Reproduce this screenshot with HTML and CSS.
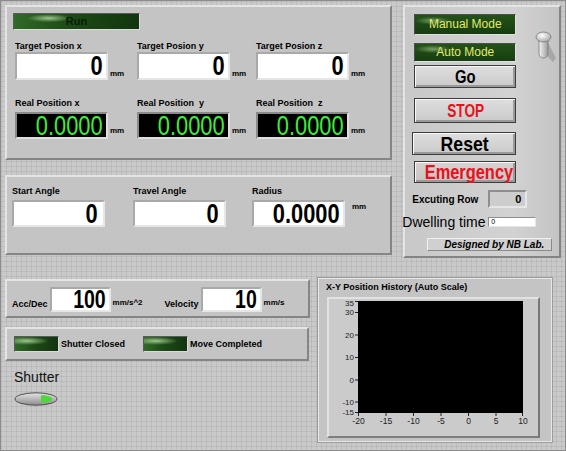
FILE: index.html
```html
<!DOCTYPE html>
<html lang="en">
<head>
    <meta charset="UTF-8">
    <title>Stage Control</title>
    <link rel="stylesheet" href="styles.css">
</head>
<body>
<div class="screen">
    <div class="top">
        <div class="left-col">
            <section class="panel pos">
                <div class="led run">Run</div>
                <div class="fields target">
                    <div class="field">
                        <div class="lbl">Target Posion x</div>
                        <div class="val-row"><div class="num ctl"><span>0</span></div><span class="unit">mm</span></div>
                    </div>
                    <div class="field">
                        <div class="lbl">Target Posion y</div>
                        <div class="val-row"><div class="num ctl"><span>0</span></div><span class="unit">mm</span></div>
                    </div>
                    <div class="field">
                        <div class="lbl">Target Posion z</div>
                        <div class="val-row"><div class="num ctl"><span>0</span></div><span class="unit">mm</span></div>
                    </div>
                </div>
                <div class="fields real">
                    <div class="field">
                        <div class="lbl">Real Position x</div>
                        <div class="val-row"><div class="num ind"><span>0.0000</span></div><span class="unit">mm</span></div>
                    </div>
                    <div class="field">
                        <div class="lbl">Real Position&nbsp; y</div>
                        <div class="val-row"><div class="num ind"><span>0.0000</span></div><span class="unit">mm</span></div>
                    </div>
                    <div class="field">
                        <div class="lbl">Real Position&nbsp; z</div>
                        <div class="val-row"><div class="num ind"><span>0.0000</span></div><span class="unit">mm</span></div>
                    </div>
                </div>
            </section>
            <section class="panel arc">
                <div class="fields angles">
                    <div class="field">
                        <div class="lbl">Start Angle</div>
                        <div class="val-row"><div class="num ctl"><span>0</span></div></div>
                    </div>
                    <div class="field">
                        <div class="lbl">Travel Angle</div>
                        <div class="val-row"><div class="num ctl"><span>0</span></div></div>
                    </div>
                    <div class="field">
                        <div class="lbl">Radius</div>
                        <div class="val-row"><div class="num ctl"><span>0.0000</span></div><span class="unit up">mm</span></div>
                    </div>
                </div>
            </section>
        </div>
        <aside class="panel ctrl">
            <div class="ctrl-top">
                <div class="stack">
                    <div class="mode manual">Manual Mode</div>
                    <div class="mode auto">Auto Mode</div>
                    <div class="btn go"><span>Go</span></div>
                    <div class="btn stop"><span>STOP</span></div>
                    <div class="btn reset"><span>Reset</span></div>
                    <div class="btn emerg"><span>Emergency</span></div>
                </div>
                <svg class="toggle" width="22" height="32" viewBox="0 0 22 32">
                    <defs>
                        <linearGradient id="lever" x1="0" x2="1">
                            <stop offset="0" stop-color="#f4f4f4"/>
                            <stop offset="1" stop-color="#9c9c9c"/>
                        </linearGradient>
                        <radialGradient id="cap" cx=".4" cy=".35" r=".7">
                            <stop offset="0" stop-color="#ffffff"/>
                            <stop offset="1" stop-color="#a4a4a4"/>
                        </radialGradient>
                    </defs>
                    <path d="M11 8 L21 27 L18 31 L9 22 Z" fill="#8e8e8e" opacity=".55"/>
                    <rect x="4" y="4" width="9" height="23" rx="4.5" fill="url(#lever)" stroke="#7a7a7a" stroke-width=".8"/>
                    <ellipse cx="8.5" cy="6" rx="7.5" ry="5" fill="url(#cap)" stroke="#7a7a7a" stroke-width=".8"/>
                </svg>
            </div>
            <div class="exec">
                <span class="exec-lbl">Excuting Row</span>
                <div class="exec-box">0</div>
            </div>
            <div class="dwell">
                <span class="dwell-lbl">Dwelling time</span>
                <div class="dwell-box">0</div>
            </div>
            <div class="designed">Designed by NB Lab.</div>
        </aside>
    </div>

    <div class="bottom">
        <div class="left-col2">
            <section class="panel motion">
                <span class="lbl2">Acc/Dec</span>
                <div class="num ctl small w61"><span>100</span></div>
                <span class="unit2">mm/s^2</span>
                <span class="lbl2 vel">Velocity</span>
                <div class="num ctl small w61"><span>10</span></div>
                <span class="unit2">mm/s</span>
            </section>
            <section class="panel status">
                <div class="st-item"><div class="led sm"></div><span>Shutter Closed</span></div>
                <div class="st-item"><div class="led sm"></div><span>Move Completed</span></div>
            </section>
            <div class="shutter">
                <div class="shutter-lbl">Shutter</div>
                <svg class="switch" width="46" height="15" viewBox="0 0 46 15">
                    <defs>
                        <linearGradient id="sw" x1="0" y1="0" x2="0" y2="1">
                            <stop offset="0" stop-color="#e4e4e4"/>
                            <stop offset="1" stop-color="#8c8c8c"/>
                        </linearGradient>
                    </defs>
                    <ellipse cx="22" cy="7" rx="21" ry="6.2" fill="url(#sw)" stroke="#4e4e4e" stroke-width="1"/>
                    <path d="M27 4 Q27 3 29 3 L36 4.5 Q41 7 36 9.5 L29 11 Q27 11 27 10 Z" fill="#4fd83c"/>
                </svg>
            </div>
        </div>
        <section class="graph">
            <div class="graph-title">X-Y Position History (Auto Scale)</div>
            <div class="plot">
                <svg width="209" height="137" viewBox="0 0 209 137">
                    <rect x="29" y="2" width="165" height="112" fill="#000"/>
                    <g stroke="#222" stroke-width="1">
                        <path d="M26 2.5h3M26 13.5h3M26 36h3M26 58.5h3M26 81h3M26 103h3M26 113.5h3"/>
                        <path d="M29.5 114v3M57 114v3M84.5 114v3M112 114v3M139.5 114v3M167 114v3M193.5 114v3"/>
                    </g>
                    <g class="ylab">
                        <text x="25" y="7">35</text>
                        <text x="25" y="16">30</text>
                        <text x="25" y="38.5">20</text>
                        <text x="25" y="61">10</text>
                        <text x="25" y="83.5">0</text>
                        <text x="25" y="106">-10</text>
                        <text x="25" y="116">-15</text>
                    </g>
                    <g class="xlab">
                        <text x="29.5" y="125">-20</text>
                        <text x="57" y="125">-15</text>
                        <text x="84.5" y="125">-10</text>
                        <text x="112" y="125">-5</text>
                        <text x="139.5" y="125">0</text>
                        <text x="167" y="125">5</text>
                        <text x="194" y="125">10</text>
                    </g>
                </svg>
            </div>
        </section>
    </div>
</div>
</body>
</html>
```

FILE: styles.css
```css
*{ margin: 0; padding: 0; }
body{ margin: 0; background: #c6c6c6; font-family: "Liberation Sans", Arial, sans-serif; color: #000; }

.screen{
    width: 566px;
    height: 451px;
    box-sizing: border-box;
    padding: 4px;
    border: 1px solid #8c8c8c;
    background-color: #c9c9c9;
    background-image:
        linear-gradient(90deg, rgba(0,0,0,.06) 1px, transparent 1px),
        linear-gradient(rgba(0,0,0,.06) 1px, transparent 1px);
    background-size: 5px 5px;
    overflow: hidden;
}

/* raised LabVIEW-style decoration */
.panel{
    box-sizing: border-box;
    background: #c4c4c4;
    border: 2px solid;
    border-color: #e4e4e4 #858585 #858585 #e4e4e4;
}

.top{ display: flex; }
.left-col{ display: flex; flex-direction: column; gap: 15px; width: 388px; }
.pos{ height: 155px; padding: 6px 0 0 6px; }
.arc{ height: 80px; padding: 9px 0 0 5px; }

.led{
    box-sizing: border-box;
    border: 1px solid;
    border-color: #5a5a5a #dadada #dadada #5a5a5a;
    background:
        radial-gradient(ellipse 22px 4px at 28% 28%, rgba(200,235,180,.75), rgba(200,235,180,0)),
        linear-gradient(90deg, #2f6a27, #1c4a15 45%, #123510);
}
.run{
    width: 127px;
    height: 17px;
    font-size: 11px;
    font-weight: bold;
    line-height: 15px;
    text-align: center;
    color: #0b1d07;
}

.fields{ display: grid; grid-template-columns: 122px 119px 1fr; }
.target{ margin: 11px 0 0 2px; }
.real{ margin: 18px 0 0 2px; }
.angles{ grid-template-columns: 121px 119px 1fr; }

.lbl{ font-size: 9px; font-weight: bold; line-height: 11px; white-space: nowrap; }
.real .lbl, .angles .lbl{ margin-bottom: 3px; }

.val-row{ display: flex; align-items: flex-end; }

.num{
    box-sizing: border-box;
    width: 93px;
    height: 28px;
    padding-right: 3px;
    border: 2px solid;
    text-align: right;
    font-size: 28px;
    line-height: 24px;
    white-space: nowrap;
}
.num span{
    display: inline-block;
    transform: scaleX(.78);
    transform-origin: 100% 50%;
}
.ctl{
    background: #fff;
    border-color: #a9a9a9 #e6e6e6 #e6e6e6 #a9a9a9;
    font-weight: bold;
}
.ind{
    height: 27px;
    line-height: 23px;
    padding-right: 7px;
    background: #000;
    color: #3dee3d;
    border-color: #8a8a8a #dedede #dedede #8a8a8a;
}
.angles .num{ height: 27px; line-height: 23px; padding-right: 5px; }

.unit{ margin: 0 0 2px 2px; font-size: 8px; font-weight: bold; }
.real .unit{ margin-bottom: 4px; }
.unit.up{ align-self: flex-start; margin: 2px 0 0 7px; }

/* right control panel */
.ctrl{
    width: 158px;
    height: 253px;
    margin-left: 11px;
    padding: 7px 0 0 9px;
    background: linear-gradient(90deg, #c8c8c8, #d2d2d2 70%, #c4c4c4);
}
.ctrl-top{ display: flex; }
.stack{ display: flex; flex-direction: column; width: 102px; }
.toggle{ margin: 17px 0 0 19px; }

.mode{
    box-sizing: border-box;
    border: 1px solid;
    border-color: #4e4e4e #e0e0e0 #e0e0e0 #4e4e4e;
    background:
        radial-gradient(ellipse 18px 4px at 18% 30%, rgba(190,225,160,.55), rgba(190,225,160,0)),
        linear-gradient(#24521a, #163d10);
    color: #e2ea6a;
    font-size: 12px;
    text-align: center;
}
.manual{ height: 21px; line-height: 19px; }
.auto{ height: 19px; line-height: 17px; margin-top: 8px; }

.btn{
    box-sizing: border-box;
    border: 1px solid #3c3c3c;
    background: linear-gradient(#dedede, #cacaca);
    box-shadow: inset 1px 1px 0 #f8f8f8, inset -2px -2px 0 #9a9a9a;
    text-align: center;
    font-weight: bold;
    white-space: nowrap;
}
.btn span{ display: inline-block; }
.go{ height: 23px; margin-top: 3px; font-size: 19px; line-height: 21px; }
.go span{ transform: scaleX(.78); }
.stop{ height: 25px; margin-top: 10px; font-size: 19px; line-height: 23px; color: #e8121c; }
.stop span{ transform: scaleX(.72); }
.reset{ height: 23px; margin: 9px 0 0 -2px; width: 104px; font-size: 21px; line-height: 21px; }
.reset span{ transform: scaleX(.84); }
.emerg{ height: 22px; margin-top: 6px; font-size: 20px; line-height: 20px; color: #e8121c; background: linear-gradient(#d8d2d2, #c8c4c4); }
.emerg span{ transform: scaleX(.82); }

.exec{ display: flex; align-items: center; margin: 7px 0 0 -2px; }
.exec-lbl{ width: 76px; font-size: 10px; font-weight: bold; }
.exec-box{
    box-sizing: border-box;
    width: 39px;
    height: 18px;
    padding-right: 4px;
    border: 2px solid;
    border-color: #8e8e8e #e6e6e6 #e6e6e6 #8e8e8e;
    background: #cdcdcd;
    text-align: right;
    font-size: 11px;
    font-weight: bold;
    line-height: 14px;
}

.dwell{ display: flex; align-items: center; margin: 6px 0 0 -12px; }
.dwell-lbl{ width: 86px; font-size: 14px; line-height: 16px; white-space: nowrap; }
.dwell-box{
    box-sizing: border-box;
    width: 48px;
    height: 10px;
    padding-left: 2px;
    border: 1px solid;
    border-color: #8e8e8e #e6e6e6 #e6e6e6 #8e8e8e;
    background: #fff;
    font-size: 7px;
    line-height: 8px;
}

.designed{
    box-sizing: border-box;
    width: 125px;
    height: 13px;
    margin: 8px 0 0 13px;
    padding-right: 7px;
    border: 1px solid;
    border-color: #f0f0f0 #8a8a8a #8a8a8a #f0f0f0;
    background: #d0d0d0;
    text-align: right;
    font-size: 10px;
    font-weight: bold;
    font-style: italic;
    line-height: 11px;
}

/* bottom area */
.bottom{ display: flex; align-items: flex-start; margin-top: 19px; }
.left-col2{ width: 305px; padding-top: 2px; }

.motion{
    display: flex;
    align-items: flex-end;
    height: 39px;
    padding: 0 0 4px 5px;
}
.lbl2{ font-size: 9px; font-weight: bold; line-height: 11px; padding-bottom: 2px; margin-right: 2px; }
.vel{ margin-left: 22px; }
.num.small{ height: 25px; font-size: 25px; line-height: 21px; padding-right: 3px; }
.w61{ width: 61px; }
.unit2{ margin: 0 0 5px 2px; font-size: 8px; font-weight: bold; }

.status{
    display: flex;
    align-items: flex-start;
    width: 304px;
    height: 34px;
    margin-top: 9px;
    padding: 7px 0 0 7px;
}
.st-item{ display: flex; align-items: center; width: 129px; font-size: 9px; font-weight: bold; }
.led.sm{ width: 45px; height: 16px; margin-right: 2px; }

.shutter{ padding: 8px 0 0 9px; }
.shutter-lbl{ font-size: 14px; line-height: 16px; color: #111; }
.switch{ display: block; margin-top: 7px; }

.graph{
    box-sizing: border-box;
    width: 236px;
    height: 166px;
    margin-left: 7px;
    padding: 4px 0 0 8px;
    background: #c4c4c4;
    border: 1px solid #9c9c9c;
    box-shadow: inset 1px 1px 0 #e8e8e8, inset -1px -1px 0 #e8e8e8;
}
.graph-title{ font-size: 9px; font-weight: bold; line-height: 11px; }
.plot{
    width: 213px;
    height: 141px;
    box-sizing: border-box;
    margin: 4px 0 0 1px;
    border: 2px solid;
    border-color: #e2e2e2 #777 #7e7e7e #e2e2e2;
    background: #cbcbcb;
}
.plot svg{ display: block; }
.ylab text{ font-size: 8px; text-anchor: end; fill: #222; }
.xlab text{ font-size: 8.5px; text-anchor: middle; fill: #222; }
```
